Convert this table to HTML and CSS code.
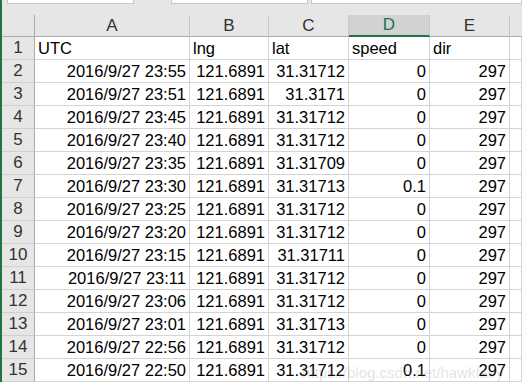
FILE: index.html
```html
<!DOCTYPE html>
<html lang="zh">
<head>
  <meta charset="UTF-8" />
  <title>track.xlsx</title>
  <link rel="stylesheet" href="styles.css">
</head>
<body>
  <div class="topbar">
    <div class="box box-name"></div>
    <div class="box box-fx"></div>
    <div class="box box-formula"></div>
  </div>

  <div class="sheet">
    <div class="corner"></div>
    <div class="col-head">A</div>
    <div class="col-head">B</div>
    <div class="col-head">C</div>
    <div class="col-head selected">D</div>
    <div class="col-head">E</div>
    <div class="col-head blank"></div>

    <div class="row-head">1</div>
    <div class="cell">UTC</div>
    <div class="cell">lng</div>
    <div class="cell">lat</div>
    <div class="cell">speed</div>
    <div class="cell">dir</div>
    <div class="cell"></div>
  </div>

  <div class="watermark">https://blog.csdn.net/hawkfairy</div>

  <script>
    var rows = [
      ['2016/9/27 23:55', '121.6891', '31.31712', '0', '297'],
      ['2016/9/27 23:51', '121.6891', '31.3171', '0', '297'],
      ['2016/9/27 23:45', '121.6891', '31.31712', '0', '297'],
      ['2016/9/27 23:40', '121.6891', '31.31712', '0', '297'],
      ['2016/9/27 23:35', '121.6891', '31.31709', '0', '297'],
      ['2016/9/27 23:30', '121.6891', '31.31713', '0.1', '297'],
      ['2016/9/27 23:25', '121.6891', '31.31712', '0', '297'],
      ['2016/9/27 23:20', '121.6891', '31.31712', '0', '297'],
      ['2016/9/27 23:15', '121.6891', '31.31711', '0', '297'],
      ['2016/9/27 23:11', '121.6891', '31.31712', '0', '297'],
      ['2016/9/27 23:06', '121.6891', '31.31712', '0', '297'],
      ['2016/9/27 23:01', '121.6891', '31.31713', '0', '297'],
      ['2016/9/27 22:56', '121.6891', '31.31712', '0', '297'],
      ['2016/9/27 22:50', '121.6891', '31.31712', '0.1', '297']
    ];

    var sheet = document.querySelector('.sheet');

    rows.forEach(function (r, i) {
      var head = document.createElement('div');
      head.className = 'row-head';
      head.textContent = i + 2;
      sheet.appendChild(head);

      r.forEach(function (val) {
        var cell = document.createElement('div');
        cell.className = 'cell num';
        cell.textContent = val;
        sheet.appendChild(cell);
      });

      var empty = document.createElement('div');
      empty.className = 'cell';
      sheet.appendChild(empty);
    });
  </script>
</body>
</html>
```

FILE: styles.css
```css
body {
  margin: 0;
  font-family: 'Liberation Sans', Arial, sans-serif;
  font-size: 16.5px;
  color: #000;
  background: #fff;
  overflow: hidden;
  position: relative;
  height: 386px;
}
.topbar {
  height: 15px;
  background: #e6e6e6;
  border-left: 2px solid #217346;
  display: flex;
  align-items: flex-start;
  box-sizing: border-box;
}
.box {
  height: 3px;
  background: #fff;
  border: 1px solid #c6c6c6;
  border-top: none;
}
.box-name {
  margin-left: 5px;
  width: 125px;
}
.box-fx {
  margin-left: 37px;
  width: 135px;
}
.box-formula {
  margin-left: 3px;
  flex: 1;
}
.sheet {
  display: grid;
  grid-template-columns: 33px 155px 79px 80px 81px 80px 1fr;
  grid-auto-rows: 23px;
  grid-template-rows: 22px;
  border-left: 2px solid #217346;
}
.corner,
.col-head,
.row-head {
  background: #e6e6e6;
  color: #333;
  font-size: 17px;
  border-right: 1px solid #c8c8c8;
  border-bottom: 1px solid #c8c8c8;
  box-sizing: border-box;
  display: flex;
  align-items: center;
  justify-content: center;
}
.col-head {
  border-bottom-color: #ababab;
}
.col-head.blank {
  border-right: none;
}
.col-head.selected {
  background: #d2d2d2;
  color: #217346;
  border-bottom: 2px solid #217346;
}
.corner {
  border-right-color: #ababab;
  border-bottom-color: #ababab;
}
.row-head {
  border-right-color: #ababab;
  border-bottom-color: #d0d0d0;
}
.cell {
  border-right: 1px solid #d4d4d4;
  border-bottom: 1px solid #d4d4d4;
  box-sizing: border-box;
  display: flex;
  align-items: center;
  padding: 0 3px;
  white-space: nowrap;
}
.cell.num {
  justify-content: flex-end;
}
.watermark {
  position: absolute;
  left: 302px;
  top: 364px;
  font-size: 15px;
  color: rgba(140, 140, 140, 0.25);
  white-space: nowrap;
}
```
